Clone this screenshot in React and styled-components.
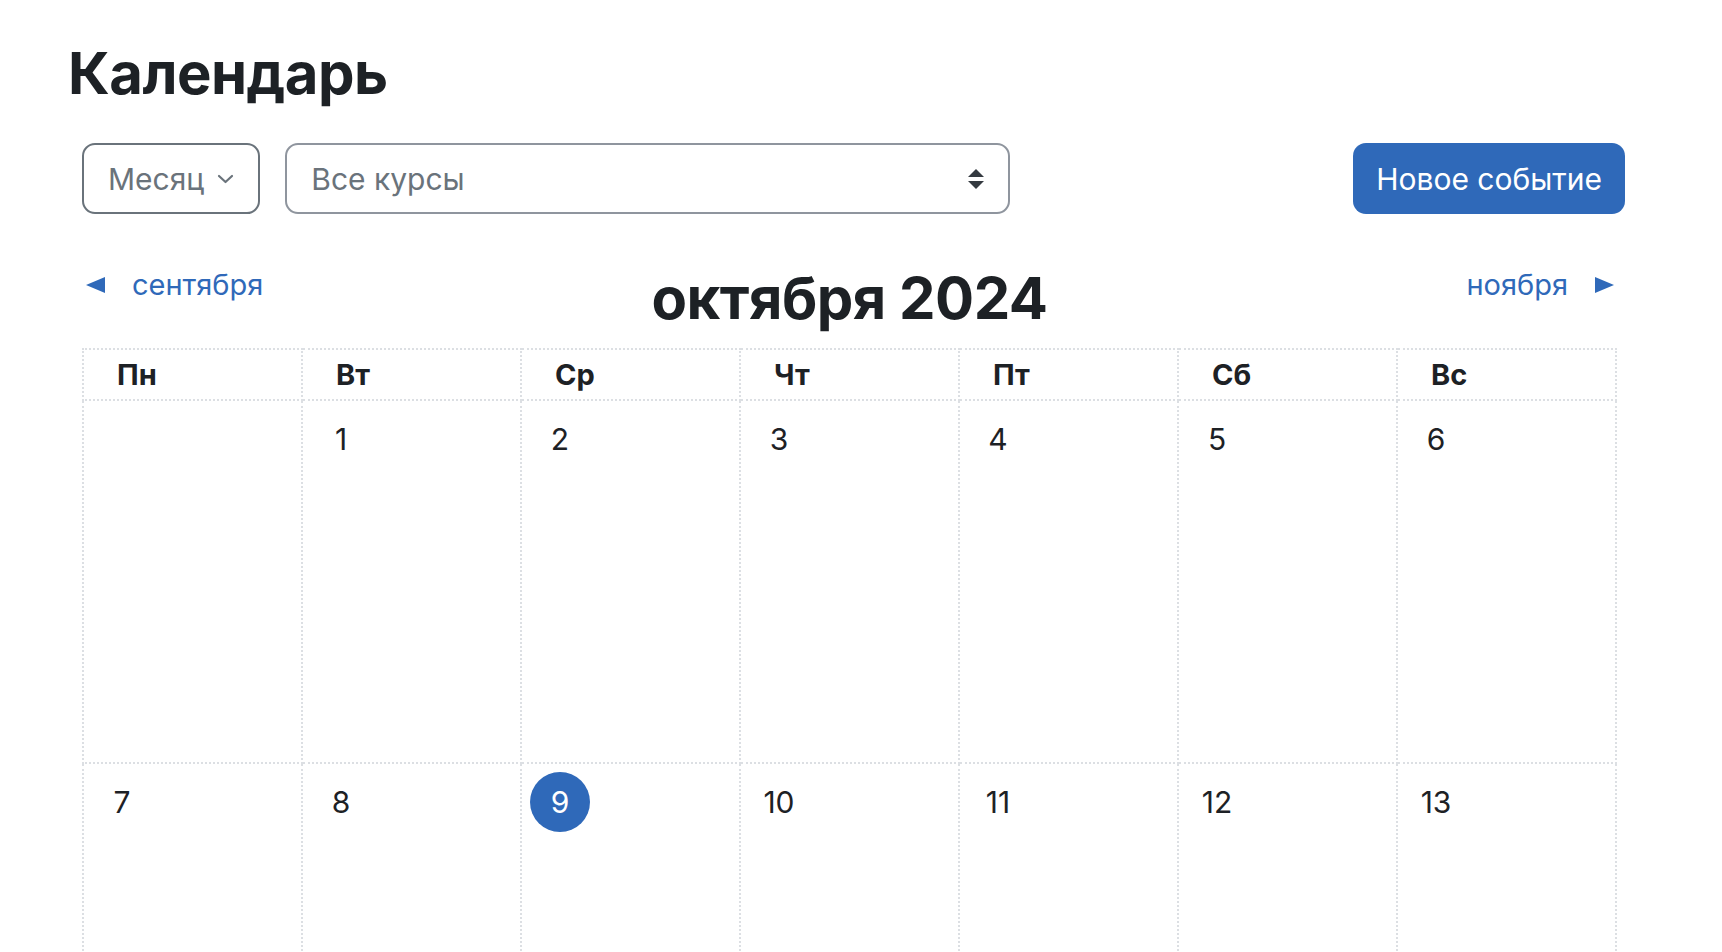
import React from "react";
import styled, { createGlobalStyle } from "styled-components";

const BLUE = "#2f69b9";
const TEXT = "#1d2125";

const GlobalStyle = createGlobalStyle`
  html, body { margin: 0; padding: 0; background: #fff; }
  body {
    font-family: Inter, "Noto Sans", "Liberation Sans", sans-serif;
    color: ${TEXT};
    font-size: 30px;
  }
  * { box-sizing: border-box; }
`;

const Page = styled.div`
  padding: 37px 97px 0 68px;
`;

const Title = styled.h1`
  margin: 0;
  font-size: 58px;
  line-height: 72px;
  font-weight: 700;
  letter-spacing: -0.5px;
`;

const Block = styled.section`
  margin-top: 34px;
  padding-left: 14px;
`;

const Toolbar = styled.div`
  display: flex;
  align-items: center;
  gap: 25px;
  height: 71px;
`;

const SelectBox = styled.div`
  height: 71px;
  display: flex;
  align-items: center;
  justify-content: space-between;
  gap: 13px;
  border: 2px solid ${(p) => p.$border};
  border-radius: 13px;
  padding: 0 24px 0 24px;
  color: #6a737b;
  font-size: 30px;
  width: ${(p) => (p.$width ? `${p.$width}px` : "auto")};
`;

const PrimaryButton = styled.button`
  margin-left: auto;
  height: 71px;
  padding: 0 23px;
  border: none;
  border-radius: 13px;
  background: ${BLUE};
  color: #fff;
  font-family: inherit;
  font-size: 30px;
`;

const Nav = styled.div`
  margin-top: 48px;
  margin-right: 8px;
  display: grid;
  grid-template-columns: 1fr auto 1fr;
  align-items: start;
`;

const NavLink = styled.a`
  display: flex;
  align-items: center;
  gap: 27px;
  color: ${BLUE};
  font-size: 29px;
  line-height: 45px;
  text-decoration: none;
  justify-self: ${(p) => (p.$end ? "end" : "start")};
  padding: ${(p) => (p.$end ? "0 3px 0 0" : "0 0 0 4px")};
`;

const MonthTitle = styled.h2`
  margin: 0;
  font-size: 58px;
  line-height: 72px;
  font-weight: 700;
  letter-spacing: -0.5px;
`;

const Table = styled.table`
  margin-top: 14px;
  width: calc(100% - 8px);
  table-layout: fixed;
  border-collapse: collapse;
`;

const HeadCell = styled.th`
  height: 51px;
  padding: 0 0 0 33px;
  text-align: left;
  font-size: 29px;
  font-weight: 700;
  border: 2px dotted #dcdfe3;
`;

const DayCell = styled.td`
  height: 363px;
  padding: 8px 0 0 8px;
  vertical-align: top;
  border: 2px dotted #dcdfe3;
`;

const DayNum = styled.span`
  width: 60px;
  height: 60px;
  border-radius: 50%;
  display: flex;
  align-items: center;
  justify-content: center;
  font-size: 30px;
  background: ${(p) => (p.$today ? BLUE : "transparent")};
  color: ${(p) => (p.$today ? "#fff" : TEXT)};
`;

const Chevron = () => (
  <svg width="17" height="10" viewBox="0 0 17 10" fill="none">
    <polyline points="2,2 8.5,8 15,2" stroke="#6a737b" strokeWidth="2.2" strokeLinecap="round" strokeLinejoin="round" />
  </svg>
);

const UpDown = () => (
  <svg width="16" height="20" viewBox="0 0 4 5">
    <path d="M2 0L0 2h4zm0 5L0 3h4z" fill="#343a40" />
  </svg>
);

const Caret = ({ dir }) => (
  <svg width="19" height="16" viewBox="0 0 19 16">
    <polygon points={dir === "left" ? "19,0 19,16 0,8" : "0,0 0,16 19,8"} fill={BLUE} />
  </svg>
);

const days = ["Пн", "Вт", "Ср", "Чт", "Пт", "Сб", "Вс"];
const weeks = [
  [null, 1, 2, 3, 4, 5, 6],
  [7, 8, 9, 10, 11, 12, 13],
];

export default function App() {
  return (
    <>
      <GlobalStyle />
      <Page>
        <Title>Календарь</Title>
        <Block>
          <Toolbar>
            <SelectBox $border="#6a737b">
              <span>Месяц</span>
              <Chevron />
            </SelectBox>
            <SelectBox $border="#8f959e" $width={725}>
              <span>Все курсы</span>
              <UpDown />
            </SelectBox>
            <PrimaryButton>Новое событие</PrimaryButton>
          </Toolbar>
          <Nav>
            <NavLink href="#">
              <Caret dir="left" />
              <span>сентября</span>
            </NavLink>
            <MonthTitle>октября 2024</MonthTitle>
            <NavLink href="#" $end>
              <span>ноября</span>
              <Caret dir="right" />
            </NavLink>
          </Nav>
          <Table>
            <thead>
              <tr>
                {days.map((d) => (
                  <HeadCell key={d}>{d}</HeadCell>
                ))}
              </tr>
            </thead>
            <tbody>
              {weeks.map((w, i) => (
                <tr key={i}>
                  {w.map((d, j) => (
                    <DayCell key={j}>
                      {d && <DayNum $today={d === 9}>{d}</DayNum>}
                    </DayCell>
                  ))}
                </tr>
              ))}
            </tbody>
          </Table>
        </Block>
      </Page>
    </>
  );
}
